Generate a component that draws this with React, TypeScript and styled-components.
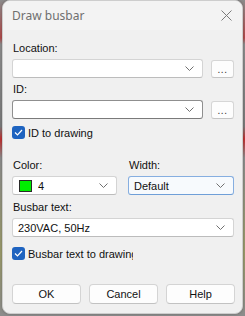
import styled, { createGlobalStyle } from "styled-components";

const GlobalStyle = createGlobalStyle`
  html, body {
    margin: 0;
    padding: 0;
    background: #9a9a9a;
  }
  body {
    font-family: "Liberation Sans", Arial, sans-serif;
    font-size: 11px;
    color: #111111;
  }
`;

const Page = styled.div`
  width: 245px;
  height: 316px;
  padding-left: 2px;
  box-sizing: border-box;
  background: linear-gradient(
    180deg,
    #8c8c8c 0%,
    #b04a4a 12%,
    #8c8c8c 14%,
    #7a7a7a 40%,
    #c03030 44%,
    #8c8c8c 50%,
    #9a9a6a 80%,
    #8c8c8c 100%
  );
`;

const Window = styled.div`
  width: 241px;
  height: 314px;
  box-sizing: border-box;
  background: #f0f0f0;
  border: 1px solid #cdcdcd;
  border-radius: 8px;
  box-shadow: 0 0 3px rgba(0, 0, 0, 0.25);
  display: flex;
  flex-direction: column;
  overflow: hidden;
`;

const TitleBar = styled.div`
  height: 29px;
  display: flex;
  align-items: center;
  justify-content: space-between;
  padding: 0 8px 0 9px;
  background: #f3f3f3;
`;

const Title = styled.span`
  font-family: "Noto Sans", "Open Sans", sans-serif;
  font-size: 12px;
  color: #6f6f6f;
`;

const CloseButton = styled.div`
  width: 16px;
  height: 16px;
  display: flex;
  align-items: center;
  justify-content: center;
`;

const Body = styled.div`
  flex: 1;
  display: flex;
  flex-direction: column;
  padding: 12px 8px 9px 9px;
`;

const Label = styled.div<{ $top?: number }>`
  height: 13px;
  line-height: 13px;
  margin-top: ${(p) => p.$top ?? 0}px;
  margin-bottom: 4px;
  padding-left: 1px;
  white-space: nowrap;
`;

const Row = styled.div`
  display: flex;
  align-items: center;
  gap: 8px;
`;

const Combo = styled.div<{ $variant?: "normal" | "hover" | "focus" }>`
  flex: 1 1 0;
  min-width: 0;
  height: 19px;
  box-sizing: border-box;
  display: flex;
  align-items: center;
  gap: 6px;
  padding: 0 8px 0 5px;
  background: ${(p) => (p.$variant === "focus" ? "#f7fafd" : "#ffffff")};
  border: 1px solid
    ${(p) =>
      p.$variant === "hover"
        ? "#8f8f8f"
        : p.$variant === "focus"
        ? "#86aee0"
        : "#d4d4d4"};
  border-bottom-color: ${(p) =>
    p.$variant === "hover" ? "#7a7a7a" : p.$variant === "focus" ? "#6f9fd8" : "#bcbcbc"};
  border-radius: 3px;
`;

const ComboText = styled.span`
  flex: 1;
  white-space: nowrap;
  overflow: hidden;
`;

const Swatch = styled.span<{ $color: string }>`
  width: 11px;
  height: 10px;
  background: ${(p) => p.$color};
  border: 1px solid #2a2a2a;
  margin-left: 1px;
  flex-shrink: 0;
`;

const MoreButton = styled.div`
  width: 23px;
  height: 18px;
  box-sizing: border-box;
  background: #fdfdfd;
  border: 1px solid #d6d6d6;
  border-bottom-color: #c4c4c4;
  border-radius: 3px;
  display: flex;
  align-items: flex-end;
  justify-content: center;
  padding-bottom: 3px;
  font-size: 10px;
  line-height: 8px;
  letter-spacing: 0.5px;
  color: #333;
`;

const CheckRow = styled.label<{ $top: number }>`
  display: flex;
  align-items: center;
  gap: 3px;
  height: 15px;
  margin-top: ${(p) => p.$top}px;
  white-space: nowrap;
  overflow: hidden;
  width: 121px;
`;

const CheckBox = styled.span`
  width: 13px;
  height: 13px;
  box-sizing: border-box;
  background: #1e63c0;
  border-radius: 3px;
  display: flex;
  align-items: center;
  justify-content: center;
  flex-shrink: 0;
`;

const Grid = styled.div`
  display: grid;
  grid-template-columns: 105px 106px;
  column-gap: 11px;
  margin-top: 19px;
`;

const Col = styled.div`
  display: flex;
  flex-direction: column;
`;

const Buttons = styled.div`
  margin-top: auto;
  display: grid;
  grid-template-columns: 69px 69px 69px;
  column-gap: 8px;
`;

const Button = styled.div`
  height: 20px;
  box-sizing: border-box;
  background: #fdfdfd;
  border: 1px solid #d4d4d4;
  border-bottom-color: #c2c2c2;
  border-radius: 4px;
  display: flex;
  align-items: center;
  justify-content: center;
`;

const Chevron = () => (
  <svg width="9" height="5" viewBox="0 0 9 5">
    <path d="M0.5 0.5 L4.5 4.5 L8.5 0.5" fill="none" stroke="#707070" strokeWidth="1" />
  </svg>
);

const Check = () => (
  <svg width="9" height="7" viewBox="0 0 9 7">
    <path d="M1 3.5 L3.5 6 L8 1" fill="none" stroke="#ffffff" strokeWidth="1.2" />
  </svg>
);

export default function App() {
  return (
    <Page>
      <GlobalStyle />
      <Window>
        <TitleBar>
          <Title>Draw busbar</Title>
          <CloseButton>
            <svg width="11" height="11" viewBox="0 0 11 11">
              <path d="M0.5 0.5 L10.5 10.5 M10.5 0.5 L0.5 10.5" stroke="#7a7a7a" strokeWidth="1" />
            </svg>
          </CloseButton>
        </TitleBar>
        <Body>
          <Label>Location:</Label>
          <Row>
            <Combo>
              <ComboText />
              <Chevron />
            </Combo>
            <MoreButton>...</MoreButton>
          </Row>

          <Label $top={5}>ID:</Label>
          <Row>
            <Combo $variant="hover">
              <ComboText />
              <Chevron />
            </Combo>
            <MoreButton>...</MoreButton>
          </Row>

          <CheckRow $top={6}>
            <CheckBox>
              <Check />
            </CheckBox>
            ID to drawing
          </CheckRow>

          <Grid>
            <Col>
              <Label>Color:</Label>
              <Row>
                <Combo>
                  <Swatch $color="#00ee00" />
                  <ComboText>4</ComboText>
                  <Chevron />
                </Combo>
              </Row>
            </Col>
            <Col>
              <Label>Width:</Label>
              <Row>
                <Combo $variant="focus">
                  <ComboText>Default</ComboText>
                  <Chevron />
                </Combo>
              </Row>
            </Col>
          </Grid>

          <Label $top={6}>Busbar text:</Label>
          <Row>
            <Combo>
              <ComboText>230VAC, 50Hz</ComboText>
              <Chevron />
            </Combo>
          </Row>

          <CheckRow $top={9}>
            <CheckBox>
              <Check />
            </CheckBox>
            Busbar text to drawing
          </CheckRow>

          <Buttons>
            <Button>OK</Button>
            <Button>Cancel</Button>
            <Button>Help</Button>
          </Buttons>
        </Body>
      </Window>
    </Page>
  );
}
